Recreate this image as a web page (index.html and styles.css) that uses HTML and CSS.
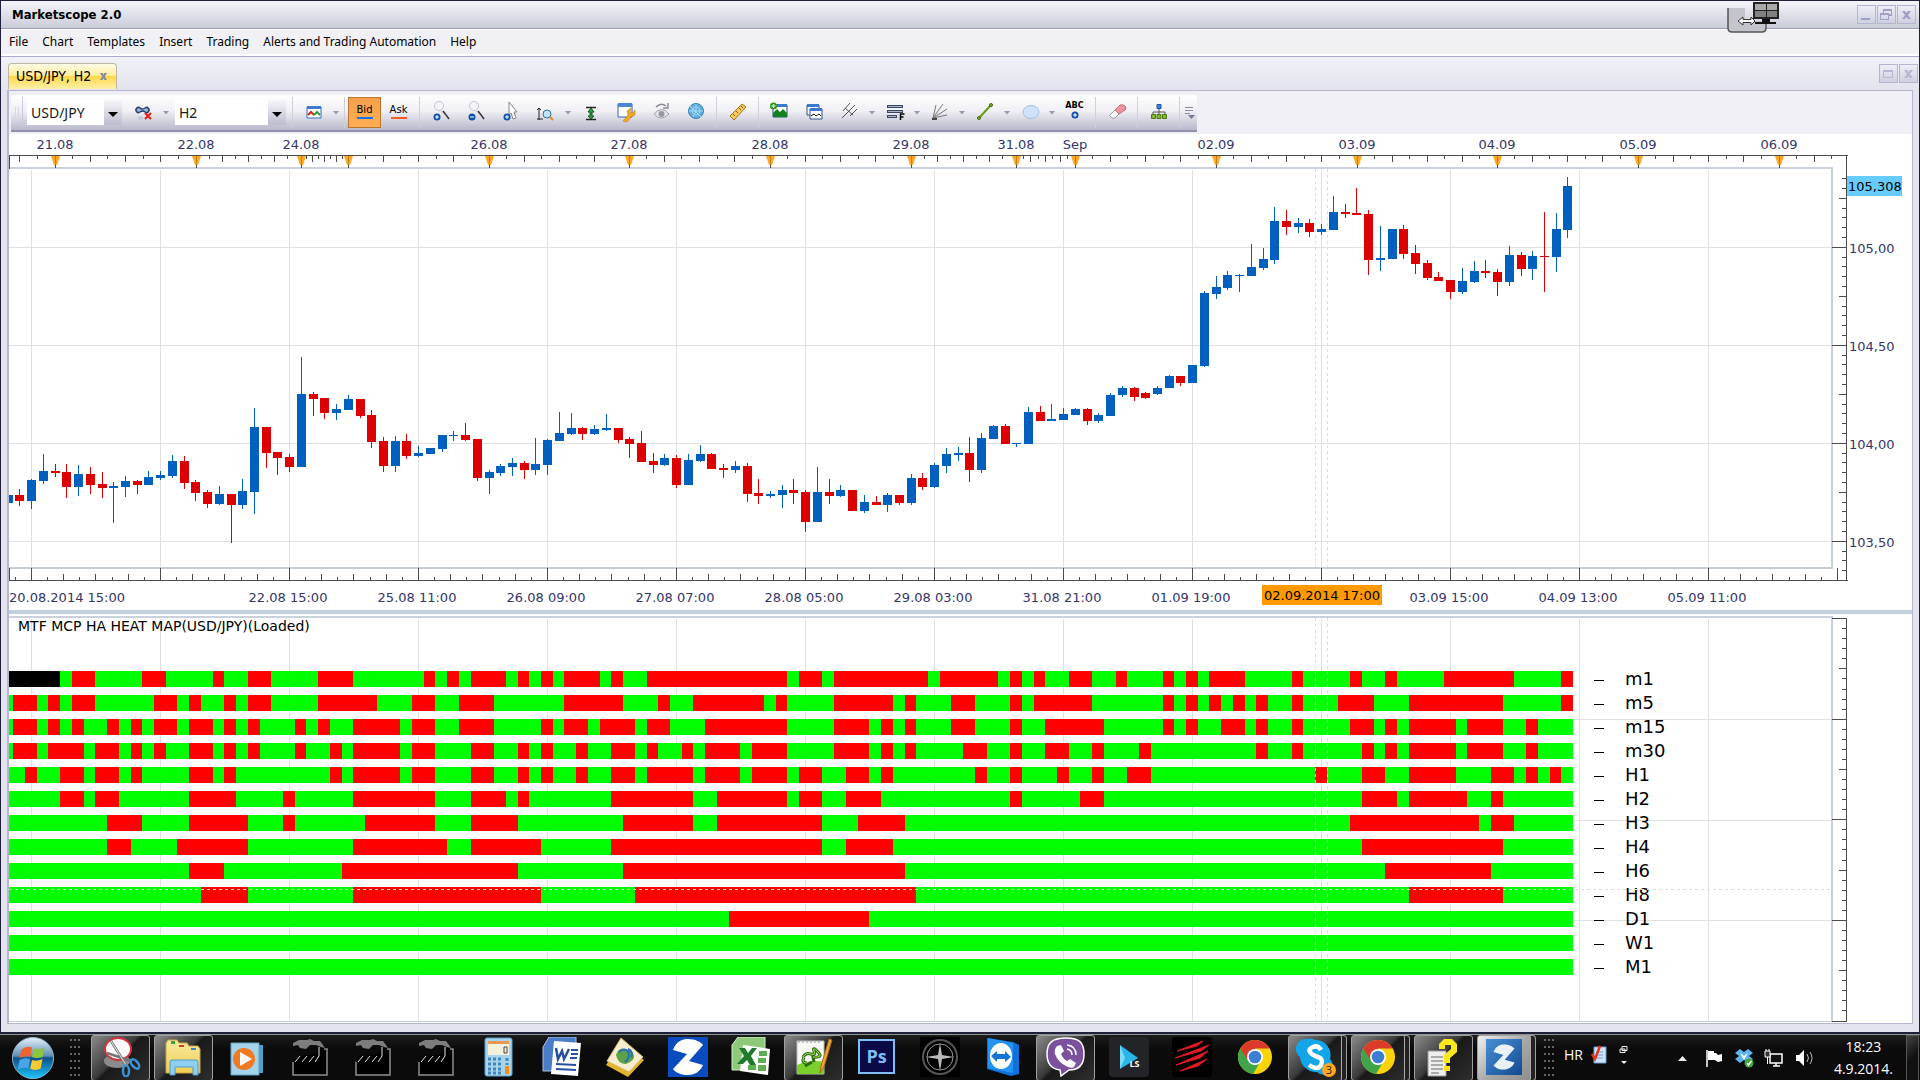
FILE: index.html
```html
<!DOCTYPE html>
<html lang="en">
<head>
<meta charset="utf-8">
<title>Marketscope 2.0</title>
<link rel="stylesheet" href="styles.css">
</head>
<body>
<svg class="defs" aria-hidden="true">
  <defs>
    <linearGradient id="gGlass" x1="0" y1="0" x2="0" y2="1"><stop offset="0" stop-color="#e8f1fb"/><stop offset=".45" stop-color="#5f8fb5"/><stop offset=".5" stop-color="#0f4f86"/><stop offset="1" stop-color="#19c8ff"/></linearGradient>
    <linearGradient id="gFolder" x1="0" y1="0" x2="0" y2="1"><stop offset="0" stop-color="#f7e9a0"/><stop offset="1" stop-color="#f2cf55"/></linearGradient>
    <linearGradient id="gBlue" x1="0" y1="0" x2="1" y2="1"><stop offset="0" stop-color="#4a8fd6"/><stop offset="1" stop-color="#124a8e"/></linearGradient>
    <symbol id="glass" viewBox="0 0 24 30">
      <circle cx="10" cy="8" r="4.500" fill="#f4f4f8" stroke="#c4c4ce"/>
      <path d="M14 13l6 8" stroke="#333" stroke-width="1.500"/><path d="M12 13l6 7" stroke="#c9c9d2"/>
      <circle cx="8" cy="19" r="3.500" fill="#0e4fa8"/>
    </symbol>
    <symbol id="factory" viewBox="0 0 40 40">
      <path d="M3 6l6-3h8l3-1 4 2h6l3 4 2 3-4-1-5-2h-6l-4 4-6-1-2-3-5 1z" fill="#7d7d7d"/>
      <path d="M3 38V25l8-6 8-1 6-1 6-6h6v27z" fill="#000"/>
      <path d="M3 25v13h34V12h-3" fill="none" stroke="#8e8e8e" stroke-width="1.500"/>
      <path d="M5 25l5-6M12 25l5-6M19 25l5-6M25 25l4-6V10" stroke="#e4e4e4" fill="none"/>
    </symbol>
    <symbol id="chrome" viewBox="0 0 40 40">
      <circle cx="20" cy="20" r="17" fill="#fbd307"/>
      <path d="M20 20L5.300 11.500A17 17 0 0 0 18 36.900L27 22z" fill="#3fa548"/>
      <path d="M20 20L13 24 5.300 11.500A17 17 0 0 1 34.700 11.500H20z" fill="#dc3b2c"/>
      <circle cx="20" cy="20" r="8" fill="#fff"/><circle cx="20" cy="20" r="6.300" fill="#3c7fd0"/>
    </symbol>
    <symbol id="zmark" viewBox="0 0 40 40">
      <path d="M5 13C8 4 15 2 20 2c7 0 13 3 15 6L21 24l14 4c-3 7-9 10-15 10-6 0-12-2-15-6l14-15z" fill="#fff"/>
    </symbol>
  </defs>
</svg>

<div class="window">
  <header class="titlebar">
    <h1>Marketscope 2.0</h1>
    <div class="dock" aria-hidden="true">
      <svg viewBox="0 0 54 32" width="54" height="32">
        <path d="M1 7v20q0 4 4 4h30q4 0 4-4v-7H18V7z" fill="#c4c4cc"/>
        <path d="M1 7v20q0 4 4 4h30q4 0 4-4v-4" fill="none" stroke="#555" stroke-width="1.500"/>
        <path d="M11 20l5-4v2.500h8V16l4 4-4 4v-2.500h-8V24z" fill="#fff" stroke="#333"/>
        <path d="M26 1h26v17H26z" fill="#222"/><path d="M28 3h11v6H28zM40 3h10v6H40z" fill="#aaa"/><path d="M28 10h11v6H28zM40 10h10v6H40z" fill="#808080"/>
        <path d="M35 18h8v3h6v2H28v-2h7z" fill="#111"/>
      </svg>
    </div>
    <div class="winbtns">
      <button aria-label="Minimize"><svg viewBox="0 0 16 16"><path d="M3 11h9v2H3z"/></svg></button>
      <button aria-label="Restore"><svg viewBox="0 0 16 16"><path d="M5 2h9v7h-3v4H2V6h3zm1 2v2h5v1h2V4zM3 8v4h7V8z" fill-rule="evenodd"/></svg></button>
      <button aria-label="Close"><svg viewBox="0 0 16 16"><path d="M4 4h3l1.500 2L10 4h3l-3 4 3 4h-3l-1.500-2L7 12H4l3-4z"/></svg></button>
    </div>
  </header>
  <nav class="menubar">
    <button>File</button><button>Chart</button><button>Templates</button><button>Insert</button><button>Trading</button><button>Alerts and Trading Automation</button><button>Help</button>
  </nav>
  <div class="tabs">
    <div class="tab"><span>USD/JPY, H2</span><button aria-label="Close tab"><svg viewBox="0 0 10 10"><path d="M1 1h3l1 2 1-2h3L6.500 5 9 9H6L5 7 4 9H1l2.500-4z"/></svg></button></div>
    <div class="winbtns soft">
      <button aria-label="Maximize chart"><svg viewBox="0 0 16 16"><path d="M3 4h10v8H3zm1 2v5h8V6z" fill-rule="evenodd"/></svg></button>
      <button aria-label="Close chart"><svg viewBox="0 0 16 16"><path d="M4 4h3l1.500 2L10 4h3l-3 4 3 4h-3l-1.500-2L7 12H4l3-4z"/></svg></button>
    </div>
  </div>

  <main class="document">
    <div class="toolrow">
      <div class="toolbar" role="toolbar">
        <span class="grip"></span>
        <span class="combo symbol"><select aria-label="Instrument"><option>USD/JPY</option></select></span>
        <button class="tool" aria-label="Link"><svg viewBox="0 0 24 30"><path d="M6 14a2.500 2.500 0 1 1 0-4q2 2 5 0a2.500 2.500 0 1 1 0 4q-2-2-5 0z" transform="translate(2 0)" fill="#9db6dc" stroke="#27406b" stroke-width="1.500"/><path d="M13 15l6 6M19 15l-6 6" stroke="#e01b12" stroke-width="2"/><path d="M6 20h5" stroke="#c3c6d4" stroke-width="3"/></svg></button>
        <button class="drop" aria-label="Link options"></button>
        <span class="combo period"><select aria-label="Period"><option>H2</option></select></span>
        <i class="sep"></i>
        <button class="tool" aria-label="Chart type"><svg viewBox="0 0 24 30"><path d="M5 9h14v11H5z" fill="#fff" stroke="#2f6fc0"/><path d="M5 8h14v3H5z" fill="#3a79cf"/><path d="M6 17l3-3 3 3" fill="none" stroke="#d42a1c" stroke-width="2"/><path d="M12 17l3-3 3 3" fill="none" stroke="#2f9a36" stroke-width="2"/></svg></button>
        <button class="drop" aria-label="Chart type options"></button>
        <i class="sep"></i>
        <button class="price bid">Bid</button>
        <button class="price ask">Ask</button>
        <i class="sep"></i>
        <button class="tool" aria-label="Zoom in"><svg viewBox="0 0 24 30"><use href="#glass" width="24" height="30"/><path d="M6 19h4M8 17v4" stroke="#fff"/></svg></button>
        <button class="tool" aria-label="Zoom out"><svg viewBox="0 0 24 30"><use href="#glass" width="24" height="30"/><path d="M6 19h4" stroke="#fff"/></svg></button>
        <button class="tool" aria-label="Pointer"><svg viewBox="0 0 24 30"><path d="M10 4l8 10h-3l2 6-3 1-2-6-2 2z" fill="#fafafe" stroke="#888" /><circle cx="8" cy="19" r="3.500" fill="#0e4fa8"/><path d="M6 19h4M8 17v4" stroke="#fff"/></svg></button>
        <button class="tool" aria-label="Fit zoom"><svg viewBox="0 0 24 30"><path d="M5 10v12M3 12l2-2 2 2M3 21h6" fill="none" stroke="#222"/><circle cx="13" cy="16" r="4" fill="#bfe6fb" stroke="#3a6f9a"/><path d="M16 19l3 3" stroke="#e08a1c" stroke-width="2"/></svg></button>
        <button class="drop" aria-label="Fit options"></button>
        <button class="tool" aria-label="Autoscale"><svg viewBox="0 0 24 30"><path d="M7 9.500h10M7 21.500h10" stroke="#222" stroke-width="1.500"/><path d="M12 10l3 4h-2v4h2l-3 3-3-3h2v-4H9z" fill="#2f9a3c" stroke="#135a1d"/></svg></button>
        <button class="tool" aria-label="Properties"><svg viewBox="0 0 24 30"><path d="M4 6h14v13H4z" fill="#fff" stroke="#2f62b5"/><path d="M4 5h14v4H4z" fill="#4b86d6"/><path d="M9 23l5-6-1-4 4-3-1 4 3 1 2-3v5l-4 2-4 5z" fill="#f0a922" stroke="#b87413" stroke-width=".500"/></svg></button>
        <button class="tool" aria-label="Show or hide"><svg viewBox="0 0 24 30"><path d="M5 16q8-9 15 0-8 8-15 0z" fill="#e6e6ec" stroke="#a0a0aa"/><circle cx="12.500" cy="16" r="3" fill="#9a9aa4"/><path d="M7 9q5-5 10-1M19 5v5h-5" fill="none" stroke="#8a8a92" stroke-width="1.500"/></svg></button>
        <button class="tool" aria-label="Color wheel"><svg viewBox="0 0 24 30"><circle cx="12" cy="13" r="7.500" fill="#5eaede" stroke="#3484ba"/><path d="M12 6v7h7M6 8l11 11M5 13h7l-3 6" stroke="#a9dbf5" fill="none"/><circle cx="12" cy="13" r="4" fill="none" stroke="#9bd3f0"/></svg></button>
        <i class="sep"></i>
        <button class="tool" aria-label="Ruler"><svg viewBox="0 0 24 30"><path d="M4 18L16 6l4 3L8 22z" fill="#f5cb5c" stroke="#a87014"/><path d="M7 16l2 2M10 13l2 2M13 10l2 2M15 8l2 2" stroke="#8a5a10"/></svg></button>
        <i class="sep"></i>
        <button class="tool" aria-label="Add indicator"><svg viewBox="0 0 24 30"><path d="M5 7h14v12H5z" fill="#fff" stroke="#2b4f86"/><path d="M5 6h14v3H5z" fill="#3a79cf"/><path d="M5 19v-4l4-4 3 3 3-3 4 4v4z" fill="#15801f"/><circle cx="5.500" cy="8" r="3.500" fill="#2f9a1c"/><path d="M3.500 8h4M5.500 6v4" stroke="#fff"/></svg></button>
        <button class="tool" aria-label="Windows"><svg viewBox="0 0 24 30"><path d="M4 7h12v10H4z" fill="#fff" stroke="#2f4f86"/><path d="M4 6h12v3H4z" fill="#3a79cf"/><path d="M7 11h12v10H7z" fill="#fff" stroke="#2f4f86"/><path d="M7 10h12v3H7z" fill="#3a79cf"/><path d="M8 18l3-2 2 2 3-2 2 2" fill="none" stroke="#111"/></svg></button>
        <button class="tool" aria-label="Pitchfork"><svg viewBox="0 0 24 30"><path d="M4 20L17 7M5 13l7-8M12 18l7-7M7 10l8 7" stroke="#555" fill="none"/></svg></button>
        <button class="drop" aria-label="Pitchfork options"></button>
        <button class="tool" aria-label="Fibonacci"><svg viewBox="0 0 24 30"><path d="M4 8.500h16M4 13.500h16M4 18.500h10" stroke="#3b4760" stroke-width="3"/><path d="M5 8.500h14M5 13.500h14M5 18.500h8" stroke="#a9b4c9"/><path d="M17.500 22v-6h4M17.500 19h3" stroke="#000" stroke-width="1.500" fill="none"/></svg></button>
        <button class="drop" aria-label="Fibonacci options"></button>
        <button class="tool" aria-label="Fan"><svg viewBox="0 0 24 30"><path d="M5 20L8 7M5 20L15 6M5 20l14-9M5 20l14-3" stroke="#777" fill="none"/><path d="M4 21h5" stroke="#444" stroke-width="2"/></svg></button>
        <button class="drop" aria-label="Fan options"></button>
        <button class="tool" aria-label="Line"><svg viewBox="0 0 24 30"><path d="M6 20L18 7" stroke="#6a9a12" stroke-width="2"/><circle cx="6" cy="20" r="1.500" fill="#8ab82a" stroke="#44660b"/><circle cx="18" cy="7" r="1.500" fill="#8ab82a" stroke="#44660b"/></svg></button>
        <button class="drop" aria-label="Line options"></button>
        <button class="tool" aria-label="Ellipse"><svg viewBox="0 0 24 30"><ellipse cx="13" cy="14" rx="8" ry="6.500" fill="#cfe2f7" stroke="#a3c0e2"/></svg></button>
        <button class="drop" aria-label="Ellipse options"></button>
        <button class="tool label-tool" aria-label="Text label"><b>ABC</b><svg viewBox="0 0 14 14"><circle cx="7" cy="5" r="3.500" fill="#1552a6"/><path d="M5 5h4M7 3v4" stroke="#fff"/></svg></button>
        <i class="sep"></i>
        <button class="tool" aria-label="Eraser"><svg viewBox="0 0 24 30"><path d="M5 17l5-5 4 4-4 4q-2 1-4-1t-1-2z" fill="#fff" stroke="#999"/><path d="M10 12l5-5q3-1 5 1t0 4l-6 4z" fill="#ec949d" stroke="#c0707a"/></svg></button>
        <i class="sep"></i>
        <button class="tool" aria-label="Strategy tree"><svg viewBox="0 0 24 30"><path d="M12 10v8M6 18v-4h12v4" fill="none" stroke="#555"/><path d="M10 6.500h4v4h-4z" fill="#3b82d8" stroke="#1d559e"/><path d="M4.500 16.500h4v4h-4zM10 16.500h4v4h-4zM15.500 16.500h4v4h-4z" fill="#86b82b" stroke="#4f7a10"/></svg></button>
        <i class="sep"></i>
        <button class="overflow" aria-label="More buttons"><svg viewBox="0 0 10 14"><path d="M0 1.500h8M0 4.500h8M0 7.500h5" stroke="#8a8aa6"/><path d="M3 9h7l-3.500 4z" fill="#77779a"/></svg></button>
      </div>
    </div>
    <svg class="chart" id="price" viewBox="9 134 1903 482" role="img" aria-label="USD/JPY price chart"></svg>
    <svg class="chart" id="heat" viewBox="9 616 1903 407" role="img" aria-label="Heat map"></svg>
  </main>
</div>

<footer class="taskbar">
  <button class="start" aria-label="Start"><svg viewBox="0 0 46 46"><circle cx="23" cy="23" r="21.500" fill="url(#gGlass)" stroke="#8fb5d2"/><path d="M11 14q5-4 11-2l-2 10q-5-2-11 1z" fill="#f0642c"/><path d="M24 13q5 2 11-1l-2 10q-6 2-11 0z" fill="#8cc63f"/><path d="M9 25q5-3 11-1l-2 10q-5-2-11 1z" fill="#4aa5e8"/><path d="M22 25q5 2 11-1l-2 10q-6 3-11 0z" fill="#fcc92e"/></svg></button>
  <span class="dots"></span>
  <div class="apps">
    <button class="open" aria-label="Snipping Tool"><svg viewBox="0 0 40 40"><ellipse cx="16" cy="24" rx="13" ry="7" fill="#8b8b8b"/><ellipse cx="17" cy="12" rx="13" ry="11" fill="#fbfbff" stroke="#d0343c" stroke-width="2"/><path d="M10 4l15 24M6 16l24 8" stroke="#777" stroke-width="2.500"/><path d="M10 4l15 24" stroke="#e6e6e6"/><ellipse cx="25" cy="34" rx="3" ry="5.500" fill="none" stroke="#3c92d8" stroke-width="2.500"/><ellipse cx="34" cy="27" rx="3" ry="5.500" fill="none" stroke="#3c92d8" stroke-width="2.500" transform="rotate(-40 34 27)"/></svg></button>
    <button class="open" aria-label="Explorer"><svg viewBox="0 0 40 40"><path d="M4 3h9l2 3h8l2 3h9l2 3v24H2V6z" fill="url(#gFolder)" stroke="#c9a640"/><path d="M7 4h4v3H7z" fill="#3ba344"/><path d="M15 8h5v2h-5z" fill="#d5372c"/><path d="M27 11h5v2h-5z" fill="#3b7fd0"/><path d="M6 38V25q0-2 2-2h24q2 0 2 2v13h-5v-8H11v8z" fill="#8ecff0" stroke="#4f9ccb"/></svg></button>
    <button aria-label="Media Player"><svg viewBox="0 0 40 40"><path d="M8 8h28v28H8z" fill="#4f9fc6"/><path d="M4 6h28v32H4z" fill="#a5d3ea" stroke="#5fa5c8"/><circle cx="17" cy="22" r="11" fill="#f07a22"/><path d="M13 15l12 7-12 7z" fill="#fff"/></svg></button>
    <button aria-label="Factory 1"><svg viewBox="0 0 40 40"><use href="#factory" width="40" height="40"/></svg></button>
    <button aria-label="Factory 2"><svg viewBox="0 0 40 40"><use href="#factory" width="40" height="40"/></svg></button>
    <button aria-label="Factory 3"><svg viewBox="0 0 40 40"><use href="#factory" width="40" height="40"/></svg></button>
    <button aria-label="Calculator"><svg viewBox="0 0 40 40"><rect x="6" y="1" width="27" height="38" rx="2" fill="#a9d4ee" stroke="#5c9ec9"/><path d="M9 4h21v14H9z" fill="#f5f0dc"/><path d="M9 4h21v3H9z" fill="#e89850"/><path d="M25 10h3v6h-3z" fill="none" stroke="#444"/><path d="M9 22h14M9 27h14M9 32h14M9 36h14" stroke="#3f87b9" stroke-width="3" stroke-dasharray="3 2"/><path d="M28 21v7" stroke="#3f87b9" stroke-width="3" stroke-dasharray="3 2"/><path d="M26 29h4v8h-4z" fill="#f08c1c"/></svg></button>
    <button aria-label="Word"><svg viewBox="0 0 40 40"><path d="M7 0h27v34H1V10z" fill="#4a7cc9" stroke="#a8c4ec"/><path d="M12 4l27 2-3 33-27-2z" fill="#fff"/><path d="M14 11l2 11 4-8 2 8 5-10" fill="none" stroke="#274f9e" stroke-width="2.500"/><path d="M29 13h7M29 17h7M28 21h7M14 27l20 1M14 32l20 1" stroke="#274f9e" stroke-width="2"/></svg></button>
    <button aria-label="Atlas"><svg viewBox="0 0 40 40"><path d="M1 28L17 6l22 17-16 17z" fill="#e4b32c"/><path d="M2 24L16 1l22 19-14 15z" fill="#f7eed0" stroke="#d6b964"/><path d="M11 18q3-8 9-6t8 4q3 6-3 9t-4 2q-8 0-10-9z" fill="#5ba344"/><path d="M14 15q6-5 9 0t-3 10M23 12q6 3 3 8" fill="none" stroke="#2a6cc0" stroke-width="2"/></svg></button>
    <button aria-label="Trading Station"><svg viewBox="0 0 40 40"><path d="M0 0h40v40H0z" fill="#0a4bc0"/><use href="#zmark" width="40" height="40"/></svg></button>
    <button aria-label="Excel"><svg viewBox="0 0 40 40"><path d="M7 0h27v33H1V8z" fill="#8fca7c" stroke="#d3efc8"/><path d="M12 8l27 4-2 26-28-4z" fill="#fff"/><path d="M28 14h8v5h-8zM27 21h8v5h-8zM17 28h8v5h-8zM27 28h8v6h-8z" fill="#5fae56"/><path d="M8 11h6l3 5 4-5h5l-6 8 5 9h-6l-3-5-4 4H6l7-8z" fill="#207a2c"/></svg></button>
    <button class="open" aria-label="Notepad++"><svg viewBox="0 0 40 40"><path d="M3 4h27v33H3z" fill="#f8f8f4" stroke="#bbb"/><path d="M3 28q14-6 27-3v12H3z" fill="#7bd02c"/><path d="M5 3v3M9 3v3M13 3v3M17 3v3M21 3v3M25 3v3" stroke="#999"/><path d="M9 20q3-5 8-3t3-3 4 1-5 5l1 5M10 20q-3 6 3 6M11 29l7-4" fill="none" stroke="#2d6a12" stroke-width="3"/><path d="M9 20q3-5 8-3t3-3 4 1-5 5M10 20q-3 6 3 6" fill="none" stroke="#a2ec4a"/><path d="M26 36l1-7 8-27 3 1-8 27z" fill="#f1a436" stroke="#a96a14"/></svg></button>
    <button aria-label="Photoshop"><span class="ps">Ps</span></button>
    <button aria-label="Scope"><svg viewBox="0 0 40 40"><path d="M0 0h40v40H0z" fill="#000"/><circle cx="20" cy="20" r="17" fill="none" stroke="#555" stroke-width="2"/><circle cx="20" cy="20" r="13" fill="none" stroke="#999"/><path d="M20 6l2 12 12 2-12 2-2 12-2-12-12-2 12-2z" fill="#bbb"/></svg></button>
    <button aria-label="TeamViewer"><svg viewBox="0 0 40 40"><path d="M4 1l26 4 6 3v29l-8 2L4 32z" fill="#0e72dc"/><path d="M5 1l25 5v30L5 31z" fill="#2394f6"/><ellipse cx="18" cy="19" rx="11" ry="13" fill="#fff"/><path d="M8 19l6-5v3h8v-3l6 6-6 5v-3h-8v3z" fill="#1674d6"/></svg></button>
    <button class="open" aria-label="Viber"><svg viewBox="0 0 40 40"><path d="M20 1c14 0 18 5 18 16s-5 16-15 16l-8 6-1-6C6 32 1 28 1 17S6 1 20 1z" fill="#7b519d" stroke="#fff" stroke-width="1.500"/><path d="M11 9l4-1 3 6-3 3q2 5 6 7l3-2 6 4-2 4q-3 2-8-1-8-4-11-12-1-5 2-8z" fill="#fff"/><path d="M21 8q9 1 9 10M21 12q5 1 5 6" fill="none" stroke="#fff" stroke-width="1.500"/></svg></button>
    <button aria-label="LS"><span class="ls"><svg viewBox="0 0 40 40"><path d="M11 8l18 13-18 11z" fill="#29b6e8"/><path d="M11 8l5 13-5 11z" fill="#7adcf6"/></svg><b>LS</b></span></button>
    <button aria-label="Claw"><svg viewBox="0 0 40 40"><rect width="40" height="40" rx="4" fill="#000"/><path d="M5 14L31 4l-6 5zM3 21L37 8l-8 6zM4 28l32-14-8 7zM8 34l27-12-9 7z" fill="#e01b22" stroke="#e01b22"/></svg></button>
    <button aria-label="Chrome"><svg viewBox="0 0 40 40"><use href="#chrome" width="40" height="40"/></svg></button>
    <button class="open stack" aria-label="Skype"><svg viewBox="0 0 40 40"><path d="M12 2a9 9 0 0 1 8 1 15 15 0 0 1 15 19 9 9 0 0 1-13 13A16 16 0 0 1 5 20 10 10 0 0 1 12 2z" fill="#12a5ea"/><path d="M26 13q-3-5-8-3t-3 5 8 5 3 8-12 0" fill="none" stroke="#fff" stroke-width="4.500"/></svg><b class="badge">3</b></button>
    <button class="open stack" aria-label="Chrome windows"><svg viewBox="0 0 40 40"><use href="#chrome" width="40" height="40"/></svg></button>
    <button class="open" aria-label="Help viewer"><svg viewBox="0 0 40 40"><path d="M4 14h18v25H4z" fill="#eee" stroke="#999"/><path d="M7 20h12M7 24h12M7 28h12M7 32h12M7 36h8" stroke="#666"/><path d="M15 12V7l5-5h8l5 5v8l-7 6v5h-6v-8l7-6V8h-6v4z" fill="#ffe81a"/><path d="M20 29h6v5h-6z" fill="#ffe81a"/></svg></button>
    <button class="open active stack" aria-label="Marketscope"><svg viewBox="0 0 40 40"><path d="M2 2h36v36H2z" fill="url(#gBlue)"/><use href="#zmark" x="6" y="5" width="28" height="30" opacity=".9"/></svg></button>
  </div>
  <span class="dots"></span>
  <div class="lang"><span>HR</span><svg viewBox="0 0 16 20"><path d="M3 2h12v16H3z" fill="#cfe4f8" stroke="#6aa0d4"/><path d="M6 7h6M6 10h6M6 13h6" stroke="#6aa0d4"/><path d="M1 9l3 5 5-13" fill="none" stroke="#e8321c" stroke-width="2.500"/></svg>
  <svg class="restore" viewBox="0 0 10 20"><path d="M3 1.500h5v4H3zM1 4h5v3.500H1z" fill="#111" stroke="#eee"/><path d="M2 16h6l-3 3z" fill="#eee"/></svg></div>
  <div class="tray">
    <svg viewBox="0 0 20 20"><path d="M4 13h9l-4.500-5z" fill="#eee"/></svg>
    <svg viewBox="0 0 20 20"><path d="M3 2v17" stroke="#fff" stroke-width="1.500"/><path d="M4 3h6v2h2l2 2 4-1v7l-4 1-3-2H4z" fill="#fff"/></svg>
    <svg viewBox="0 0 20 20"><path d="M6 1l4 3 4-3 5 4-4 3 4 3-5 4-4-3-4 3-5-4 4-3-4-3z" fill="#5db4ee"/><path d="M6 5l4 3 4-3-4 7z" fill="#fff"/><circle cx="15" cy="15" r="4.500" fill="#3da83e"/><path d="M13 15l1.500 2 3-4" fill="none" stroke="#fff" stroke-width="1.500"/></svg>
    <svg viewBox="0 0 20 20"><path d="M6 6h12v9H6z" fill="#111" stroke="#fff" stroke-width="1.500"/><path d="M9 18h7M12 15v3" stroke="#fff" stroke-width="1.500"/><path d="M1 3h5v6H1zM2 1v2M5 1v2M3.500 9v7" fill="#333" stroke="#fff"/></svg>
    <svg viewBox="0 0 20 20"><path d="M2 7h3l5-5v16l-5-5H2z" fill="#fff"/><path d="M13 6q3 4 0 8M16 4q4 6 0 12" fill="none" stroke="#bbb"/></svg>
  </div>
  <div class="clock"><time>18:23</time><time>4.9.2014.</time></div>
  <button class="desktop" aria-label="Show desktop"></button>
</footer>
<script src="app.js"></script>
</body>
</html>
```

FILE: styles.css
```css
* { box-sizing: border-box; }

body {
  margin: 0;
  min-height: 100vh;
  display: flex;
  flex-direction: column;
  background: #0d0d0d;
  color: #000;
  font: 12px/16px "Noto Sans", sans-serif;
}

button {
  margin: 0;
  padding: 0;
  border: 0;
  background: none;
  color: inherit;
  font: inherit;
}

svg { display: block; }
.defs { position: absolute; width: 0; height: 0; }

.window {
  flex: 1;
  display: flex;
  flex-direction: column;
  padding: 1px 1px 2px;
  background: #20203a;
}

.titlebar {
  position: relative;
  display: flex;
  align-items: center;
  justify-content: space-between;
  height: 28px;
  padding: 0 3px 0 11px;
  background: linear-gradient(#f4f4f9, #dfe0ea 50%, #cbccda);
  border-bottom: 1px solid #9a9bba;
}

.titlebar h1 {
  margin: 0;
  font: bold 13px/16px "DejaVu Sans Condensed", "DejaVu Sans", sans-serif;
}

.dock { position: absolute; top: 0; right: 138px; z-index: 1; }

.winbtns { display: flex; gap: 1px; }
.winbtns button {
  width: 19px;
  height: 19px;
  border: 1px solid #b4b5d0;
  background: linear-gradient(#eeeef6, #cfd0e0);
}
.winbtns svg { width: 16px; height: 16px; fill: #9d9fc4; }
.winbtns.soft svg { fill: #b6b7d2; }

.menubar {
  display: flex;
  align-items: center;
  gap: 14px;
  height: 27px;
  padding: 0 8px 1px;
  background: #f0f0f5;
  border-top: 1px solid #fff;
  border-bottom: 2px solid #fff;
}

.tabs {
  display: flex;
  align-items: flex-end;
  justify-content: space-between;
  height: 34px;
  padding: 0 1px 0 7px;
  border-top: 1px solid #aaaac8;
  background: linear-gradient(#f1f1f8, #e3e3ee);
}

.tab {
  display: flex;
  align-items: center;
  gap: 8px;
  height: 26px;
  padding: 0 8px 1px 7px;
  margin-bottom: 1px;
  border: 1px solid #bdb7a0;
  border-bottom: 0;
  border-radius: 4px 4px 0 0;
  background: linear-gradient(#fffbe6, #ffeea0 45%, #ffd84a 50%, #fff0a8);
  font: 14px/16px "DejaVu Sans Condensed", "DejaVu Sans", sans-serif;
}
.tab svg { width: 9px; height: 9px; fill: #8a8aa0; }
.tabs .winbtns { align-self: center; }

.document {
  flex: 1;
  margin: 0 6px 8px;
  border: 1px solid #b6b5d0;
  border-width: 1px 1px 1px 2px;
  background: #fff;
  box-shadow: 0 0 0 8px #e4e4ee;
  clip-path: inset(0 -6px -8px -6px);
}

.toolrow {
  display: flex;
  padding: 4px 2px 2px;
  background: #f0eff5;
}

.toolbar {
  display: flex;
  align-items: center;
  height: 37px;
  border-bottom: 2px solid #908fac;
  background: linear-gradient(#fff, #f0f0f5 45%, #b9b8cc);
}

.grip {
  width: 12px;
  height: 31px;
  margin-right: 4px;
  border-right: 1px solid #c8c8d6;
  background: repeating-linear-gradient(90deg, #d6d6e0 0 1px, transparent 1px 3px) 4px 10px / 6px 10px no-repeat;
}

.combo { position: relative; display: flex; height: 25px; }
.combo select {
  appearance: none;
  width: 100%;
  padding: 0 22px 0 4px;
  border: 0;
  border-radius: 0;
  background: linear-gradient(#f6f6fa, #bdbccf) right / 18px 100% no-repeat #fff;
  color: #1a1a1a;
  font: 14px/24px "Noto Sans", sans-serif;
}
.combo::after {
  content: "";
  position: absolute;
  right: 4px;
  top: 12px;
  border: 5px solid transparent;
  border-top-color: #000;
  border-bottom: 0;
  pointer-events: none;
}
.symbol { width: 95px; margin-right: 4px; }
.period { width: 111px; margin: 0 3px 0 4px; }

.sep {
  width: 1px;
  height: 31px;
  margin: 0 3px;
  background: #d0d0dc;
}

.tool { width: 35px; display: flex; justify-content: center; }
.tool svg { width: 24px; height: 30px; }
.label-tool { flex-direction: column; align-items: center; }
.label-tool b { font: bold 9px/9px "DejaVu Sans Condensed", "DejaVu Sans", sans-serif; }
.label-tool svg { width: 14px; height: 14px; }

.drop {
  width: 10px;
  height: 4px;
  background: #9b9bb0;
  clip-path: polygon(15% 0, 85% 0, 50% 100%);
}

.price {
  width: 33px;
  height: 31px;
  padding-bottom: 4px;
  font: 10px/14px "DejaVu Sans", sans-serif;
}
.price::after { content: ""; display: block; width: 16px; height: 2px; margin: 0 auto; background: #ff5a2a; }
.bid { border: 1px solid #b8762c; background: linear-gradient(#f5a04c, #ffad55); }
.bid::after { background: #1673f0; }
.ask { width: 35px; }

.overflow { width: 14px; display: flex; justify-content: center; }
.overflow svg { width: 10px; height: 14px; }

.chart { width: 100%; height: auto; background: #fff; }
.chart text { font: 13px "DejaVu Sans", sans-serif; fill: #35356b; }
.chart text.mid { text-anchor: middle; }
.chart text.dark { fill: #000; }
.chart text.caption { font-size: 14px; fill: #000; }
.chart text.row { font-size: 18px; fill: #000; }
.chart rect, .chart line { shape-rendering: crispEdges; }
.grid { stroke: #e0e0e0; }
.axis { stroke: #4c4c4c; }
.dash { stroke: #dcdcdc; stroke-dasharray: 3 3; }

.taskbar {
  display: flex;
  align-items: center;
  height: 47px;
  padding: 0 1px 0 10px;
  border-top: 1px solid #8c9494;
  background: linear-gradient(#1c1c1c, #0b0b0b 30%);
  color: #fff;
  font: 14px/24px "Open Sans", sans-serif;
}
.start svg { width: 46px; height: 44px; }
.dots {
  width: 10px;
  height: 38px;
  background: radial-gradient(circle at 1px 1px, #666 1px, transparent 1px) 0 0 / 4px 7px;
}
.start + .dots { margin: 0 11px 0 14px; }

.apps { display: flex; gap: 4px; }
.apps button {
  position: relative;
  display: flex;
  align-items: center;
  justify-content: center;
  width: 59px;
  height: 46px;
  padding-bottom: 3px;
}
.apps svg { width: 40px; height: 40px; }
.apps .open {
  border: 1px solid #a0a0a0;
  border-radius: 3px;
  background: linear-gradient(135deg, #8a8a8a, #3a3a3a 45%, #191919 50%, #2e2e2e);
}
.apps .active { background: linear-gradient(135deg, #f0f0f0, #a8a8a8 50%, #8c8c8c); }
.apps .stack { padding-right: 6px; box-shadow: inset -5px 0 0 -1px #222, inset -6px 0 0 -1px #aaa; }

.ps {
  width: 37px;
  height: 35px;
  border: 2px solid #7fbdf5;
  background: #0a0a46;
  color: #7fbdf5;
  font: bold 18px/30px "Open Sans", sans-serif;
}
.ls { position: relative; border-radius: 4px; background: #222428; }
.ls b { position: absolute; right: 9px; bottom: 8px; font: bold 9px/10px "Open Sans", sans-serif; }
.badge {
  position: absolute;
  right: 10px;
  bottom: 3px;
  width: 14px;
  height: 14px;
  border-radius: 7px;
  background: #ffa81a;
  color: #222;
  font: 11px/14px "Open Sans", sans-serif;
}
.apps + .dots { margin: 0 0 0 8px; }

.lang { display: flex; align-items: center; gap: 8px; margin: 0 0 6px 10px; }
.lang svg { width: 16px; height: 20px; }
.lang .restore { width: 10px; margin-left: 4px; }
.tray { display: flex; align-items: center; gap: 10px; margin-left: auto; }
.tray svg { width: 20px; height: 20px; }
.clock { display: flex; flex-direction: column; align-items: center; line-height: 22px; margin: 0 13px 0 20px; }
.desktop {
  width: 13px;
  height: 46px;
  border: 1px solid #555;
  background: linear-gradient(135deg, #444, #111 50%);
}
```

FILE: app.js
```js
const NS = "http://www.w3.org/2000/svg";

function add(parent, tag, attrs, text) {
  const node = document.createElementNS(NS, tag);
  for (const key in attrs) node.setAttribute(key, attrs[key]);
  if (text) node.textContent = text;
  parent.appendChild(node);
}
function vline(svg, x, y1, y2, cls) {
  const px = Math.floor(x) + 0.5;
  add(svg, "line", { x1: px, x2: px, y1, y2, class: cls });
}
function hline(svg, y, x1, x2, cls) {
  const py = Math.floor(y) + 0.5;
  add(svg, "line", { x1, x2, y1: py, y2: py, class: cls });
}
function box(svg, x, y, width, height, fill) {
  add(svg, "rect", { x, y, width, height, fill });
}

const STEP = 129 / 11;
const ORIGIN = 31.4;
const LEFT = 9, RIGHT = 1832, AXIS = 1847;

// Candles: direction (u up, d down), high, body top, body bottom, low
const candles = `u495,495,503,503 d489,495,501,506 u479,480,501,509 u454,471,481,484 d464,471,473,477 d464,472,487,498
u465,474,487,496 d467,474,485,494 d472,484,488,498 u482,486,488,523 u476,481,487,497 d480,481,485,494 u471,477,485,485
u471,475,478,480 u455,461,476,478 d456,461,483,489 d480,482,493,501 d490,492,504,508 u486,494,504,505 d494,494,505,543
u479,491,505,509 u408,427,492,514 d427,427,453,468 d452,452,458,475 d454,457,467,472 u357,394,467,467 d392,394,399,416
d398,398,413,419 u404,409,413,420 u395,399,410,410 d399,399,416,418 d410,415,442,448 d437,441,466,472 u436,441,466,472
d434,441,456,459 u446,453,456,457 u448,448,454,454 u435,435,449,452 u431,435,436,441 d423,435,440,441 d439,439,478,481
u470,472,478,494 u464,466,473,476 u458,463,467,476 d461,463,470,479 u438,464,470,475 u439,440,465,475 u412,433,441,441
u413,428,434,435 d427,428,434,440 u425,429,434,435 u414,428,430,431 d428,428,440,443 d437,439,444,458 d431,443,462,462
d453,461,465,473 u454,458,465,466 d455,458,485,488 u454,460,485,485 u445,454,461,462 d453,454,469,469 d464,468,470,478
u461,466,470,473 d463,466,494,502 d479,493,496,504 u491,494,496,498 u485,490,495,508 d479,490,493,504 d490,492,522,532
u467,492,522,522 d479,492,496,504 u485,490,496,497 d490,490,511,511 u495,502,511,513 d496,502,505,505 u493,495,505,512
d495,495,503,505 u474,478,503,505 d473,478,487,490 u463,465,487,488 u448,454,466,473 u447,453,455,461 d437,453,470,482
u433,438,470,473 u425,426,439,439 d424,426,444,444 u443,443,444,447 u407,412,444,444 d406,412,421,421 u404,419,421,421
u408,414,420,420 u408,409,415,415 d408,409,421,425 u413,415,421,423 u393,395,416,416 u386,388,395,397 d387,388,397,401
d392,393,398,399 u386,388,394,395 u375,376,388,388 d376,376,383,386 u365,365,383,383 u291,293,366,367 u276,287,294,299
u271,275,288,290 u274,275,276,292 u244,267,276,276 u248,259,268,270 u207,221,260,264 d210,221,227,235 u218,223,227,233
d219,223,232,237 u224,229,232,235 u196,212,230,230 d204,212,214,218 d188,213,215,215 d210,214,260,275 u226,258,260,271
u229,229,259,259 d225,229,254,259 d245,253,264,274 d260,263,278,280 d272,277,281,281 d280,280,292,299 u268,281,292,294
u261,271,282,283 d260,271,273,278 d269,272,282,296 u246,255,282,286 d252,255,269,276 u251,256,269,280 d212,256,257,292
u213,229,257,272 u177,186,230,238`.split(/\s+/);

const price = document.getElementById("price");

for (let i = 0; i < 14; i++) vline(price, 31 + 129 * i, 170, 567, "grid");
[247, 345, 443, 541].forEach(y => hline(price, y, LEFT, RIGHT - 1, "grid"));
vline(price, 1315, 169, 567, "dash");
vline(price, 1327, 169, 567, "dash");

candles.forEach((item, i) => {
  const [high, top, bottom, low] = item.slice(1).split(",").map(Number);
  const x = Math.round(ORIGIN + STEP * (i - 2) - 0.2);
  const fill = item[0] === "u" ? "#0060c0" : "#dc0000";
  box(price, x, high, 1, low - high, fill);
  const left = Math.max(LEFT, x - 4);
  box(price, left, top, x + 5 - left, bottom - top, fill);
});

// Frame of the price panel
box(price, LEFT, 167, RIGHT - LEFT + 1, 2, "#c9d2dc");
box(price, LEFT, 567, RIGHT - LEFT + 1, 2, "#c5ccd4");
box(price, RIGHT - 1, 167, 2, 402, "#c5d0dc");

// Calendar scale above the chart
hline(price, 155, LEFT, AXIS + 1, "axis");
vline(price, LEFT, 155, 169, "axis");
const days = [[-86, ""], [55, "21.08"], [196, "22.08"], [301, "24.08"], [348, ""], [489, "26.08"], [629, "27.08"], [770, "28.08"],
  [911, "29.08"], [1016, "31.08"], [1075, "Sep"], [1216, "02.09"], [1357, "03.09"], [1497, "04.09"], [1638, "05.09"], [1779, "06.09"], [1920, ""]];
days.forEach(([x, label], i) => {
  const next = days[i + 1];
  if (next) for (let t = 1; t < 8; t++) {
    const tx = x + (next[0] - x) * t / 8;
    if (tx > LEFT && tx < AXIS) vline(price, tx, 156, t % 2 ? 159 : 162, "axis");
  }
  if (x < 0 || x > RIGHT) return;
  add(price, "path", { d: `M${x - 4} 156h9l-3 9h-3z`, fill: "#ffa828" });
  vline(price, x, 156, 168, "axis");
  box(price, x, 156, 1, 9, "#c87f10");
  if (label) add(price, "text", { x: x, y: 149, class: "mid" }, label);
});

// Time scale under the chart
hline(price, 580, LEFT, AXIS + 1, "axis");
vline(price, LEFT, 568, 580, "axis");
for (let i = -1; i < 113; i++) {
  const x = 31.4 + 16.125 * i;
  if (x < AXIS - 2) vline(price, x, i % 8 === 0 ? 568 : i % 2 === 0 ? 574 : 577, 580, "axis");
}
["22.08 15:00", "25.08 11:00", "26.08 09:00", "27.08 07:00", "28.08 05:00", "29.08 03:00", "31.08 21:00", "01.09 19:00", "",
  "03.09 15:00", "04.09 13:00", "05.09 11:00"].forEach((label, i) => {
  if (label) add(price, "text", { x: 288 + 129 * i, y: 602, class: "mid" }, label);
});
add(price, "text", { x: 9, y: 602 }, "20.08.2014 15:00");
box(price, 1262, 585, 120, 20, "#ff9900");
add(price, "text", { x: 1322, y: 600, class: "mid dark" }, "02.09.2014 17:00");

// Price scale
vline(price, AXIS - 1, 155, 581, "axis");
for (let i = -7; i < 34; i++) {
  const length = i % 10 === 0 ? 14 : i % 5 === 0 ? 7 : 4;
  hline(price, 247.3 + 9.8 * i, AXIS - 1 - length, AXIS, "axis");
}
["105,00", "104,50", "104,00", "103,50"].forEach((label, i) => {
  add(price, "text", { x: 1849, y: 253 + 98 * i }, label);
});
box(price, AXIS, 176, 55, 20, "#66ccff");
add(price, "text", { x: 1848, y: 191, class: "dark" }, "105,308");

box(price, LEFT, 610, 1903, 4, "#c5d0dd");

// Heat map: falling runs of each row as start-end candle numbers
const rows = {
  m1: "6-8 12-14 18-19 21-23 27-30 36-37 38-39 40-43 44-45 46-47 48-51 52-53 55-67 68-70 71-79 80-85 86-87 88-89 91-93 95-96 99-100 101-102 103-106 110-111 115-116 118-119 123-129 133-134",
  m5: "1-3 4-5 6-8 13-15 16-17 19-20 21-23 27-32 35-37 39-42 48-53 56-57 59-65 66-67 71-76 77-78 81-83 86-87 88-93 99-100 101-102 103-104 105-106 107-108 110-111 114-117 120-128 133-134",
  m15: "1-3 4-5 6-7 9-10 11-12 13-15 16-18 19-20 21-22 25-26 27-28 30-34 35-37 39-42 46-47 48-50 51-54 55-57 60-67 71-74 75-76 77-78 81-83 86-87 89-94 99-100 101-102 104-106 107-108 110-111 115-117 118-119 120-124 125-128 130-131",
  m30: "1-3 4-7 8-10 11-12 13-14 16-18 19-20 21-22 25-26 28-29 30-34 35-37 40-42 44-45 46-47 49-50 52-54 55-56 58-59 60-63 64-67 71-74 75-76 77-78 82-84 86-87 89-91 93-94 97-98 107-108 110-111 116-117 118-119 120-124 125-128 130-131",
  H1: "2-3 5-7 8-10 11-12 16-18 19-20 28-29 30-34 35-37 40-42 44-45 46-47 49-50 52-54 55-59 60-63 64-67 68-70 72-74 75-76 83-84 86-87 90-91 93-94 96-98 112-113 116-118 120-124 127-129 130-131 132-133",
  H2: "5-7 8-10 16-20 24-25 30-37 40-43 44-45 52-59 61-67 68-70 72-75 86-87 92-94 116-119 120-125 127-128",
  H3: "9-12 16-21 24-25 31-37 40-44 53-59 61-70 73-77 115-126 127-129",
  H4: "9-11 15-21 30-38 40-46 52-70 72-76 116-128",
  H6: "16-19 29-44 53-77 118-127",
  H8: "17-21 30-46 54-78 120-128",
  D1: "62-74",
  W1: "",
  M1: ""
};
const heat = document.getElementById("heat");
const edge = c => Math.max(LEFT, Math.floor(ORIGIN + STEP * (c - 2.5)));

for (let i = 0; i < 14; i++) vline(heat, 31 + 129 * i, 619, 1021, "grid");
[719, 820, 920].forEach(y => hline(heat, y, LEFT, RIGHT - 1, "grid"));

Object.entries(rows).forEach(([name, runs], i) => {
  const y = 671 + 24 * i;
  box(heat, LEFT, y, edge(134) - LEFT, 16, "#00ff00");
  if (i === 0) box(heat, LEFT, y, edge(5) - LEFT, 16, "#000");
  runs.split(" ").filter(Boolean).forEach(run => {
    const [from, to] = run.split("-").map(Number);
    box(heat, edge(from), y, edge(to) - edge(from), 16, "#ff0000");
  });
  box(heat, 1594, y + 9, 10, 1, "#000");
  add(heat, "text", { x: 1625, y: y + 14, class: "row" }, name);
});
vline(heat, 1315, 618, 1021, "dash");
vline(heat, 1327, 618, 1021, "dash");
hline(heat, 889, LEFT, RIGHT, "dash");

box(heat, LEFT, 616, RIGHT - LEFT + 1, 2, "#c9d2dc");
box(heat, LEFT, 1021, RIGHT - LEFT + 1, 1, "#c5ccd4");
box(heat, RIGHT - 1, 616, 2, 406, "#c5d0dc");
vline(heat, AXIS - 1, 618, 1022, "axis");
for (let i = 0; i <= 40; i++) {
  const length = i % 10 === 0 ? 14 : i % 5 === 0 ? 7 : 4;
  hline(heat, 618.6 + 10.06 * i, AXIS - 1 - length, AXIS, "axis");
}
add(heat, "text", { x: 18, y: 631, class: "caption" }, "MTF MCP HA HEAT MAP(USD/JPY)(Loaded)");
```
